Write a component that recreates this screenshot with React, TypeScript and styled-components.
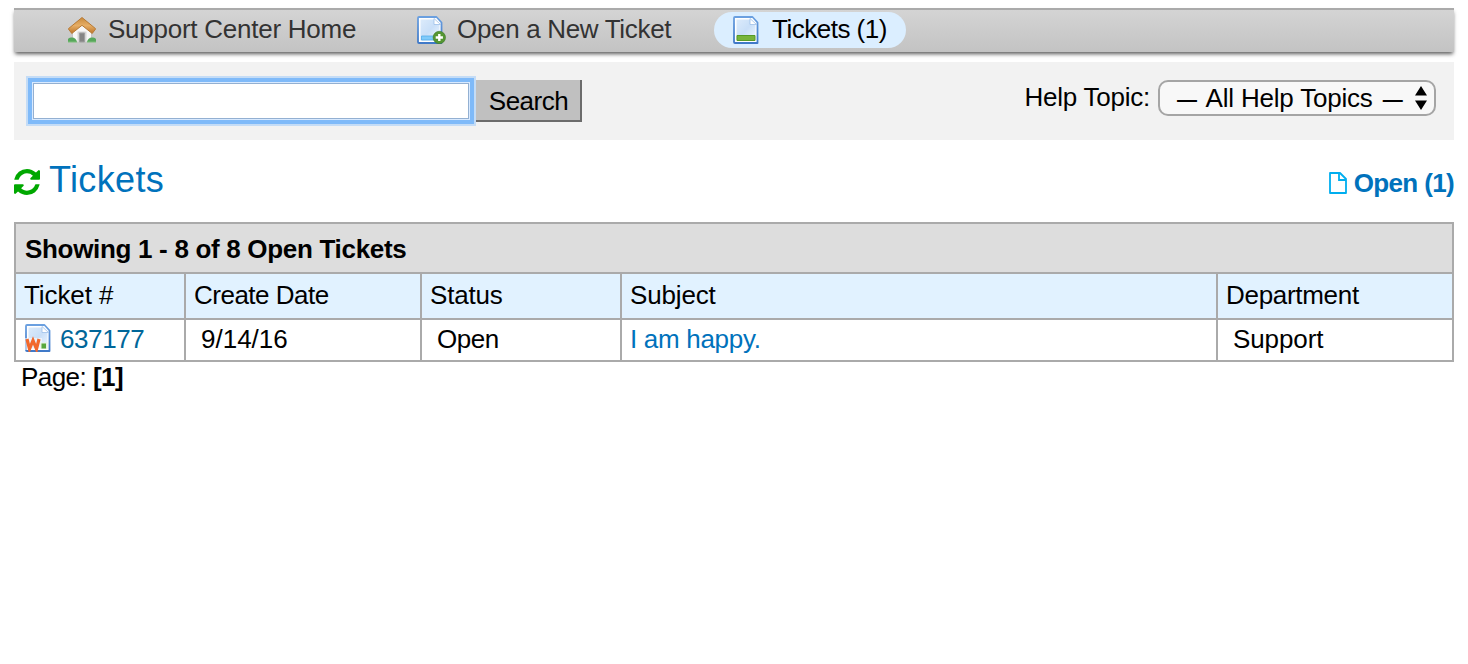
import React from "react";
import styled, { createGlobalStyle } from "styled-components";

const GlobalStyle = createGlobalStyle`
  * { box-sizing: border-box; }
  body {
    margin: 0;
    background: #fff;
    color: #000;
    font-family: "Liberation Sans", Arial, sans-serif;
    font-size: 26px;
    line-height: 30px;
  }
`;

const Page = styled.div`
  padding: 8px 14px 0;
`;

const Label = styled.span<{ $track?: number }>`
  white-space: nowrap;
  letter-spacing: ${(p) => p.$track ?? 0}px;
`;

const Nav = styled.nav`
  display: flex;
  align-items: flex-start;
  height: 44px;
  padding: 2px 0 0 35px;
  border-top: 2px solid #aaa;
  background: linear-gradient(#d4d4d4, #c3c3c3);
  box-shadow: 0 3px 4px -1px rgba(0, 0, 0, 0.65);
`;

const NavItem = styled.a<{ $active?: boolean; $width: number; $gap: number }>`
  display: flex;
  align-items: center;
  gap: ${(p) => p.$gap}px;
  width: ${(p) => p.$width}px;
  height: 36px;
  padding-left: 19px;
  border-radius: 18px;
  background: ${(p) => (p.$active ? "#dbeeff" : "transparent")};
  color: ${(p) => (p.$active ? "#000" : "#333")};
  margin-right: 30px;

  svg { flex: none; }
  ${Label} { padding-bottom: 2px; }
`;

const SearchBar = styled.section`
  display: flex;
  justify-content: space-between;
  align-items: flex-start;
  height: 78px;
  margin-top: 10px;
  padding: 18px 18px 0 19px;
  background: #f2f2f2;
`;

const SearchForm = styled.form`
  display: flex;
`;

const SearchInput = styled.input`
  width: 436px;
  height: 36px;
  margin: 3px 7px 0 0;
  padding: 0 6px;
  border: 1px solid #93b0d2;
  border-radius: 0;
  outline: none;
  background: #fff;
  font: inherit;
  box-shadow: 0 0 0 1px #d9eaff, 0 0 0 5px #7fbaf9, 0 0 0 7px #c4dcf6;
`;

const SearchButton = styled.button`
  width: 106px;
  height: 42px;
  padding: 1px 0 0 1px;
  border: 0 solid #6c6c6c;
  border-right-width: 2px;
  border-bottom-width: 2px;
  background: #c0c0c0;
  color: #000;
  font: inherit;
`;

const TopicField = styled.div`
  display: flex;
  align-items: flex-start;
  gap: 8px;
  line-height: 34px;
`;

const TopicSelect = styled.div`
  display: flex;
  align-items: center;
  justify-content: space-between;
  width: 278px;
  height: 36px;
  padding: 0 7px 0 17px;
  border: 2px solid #a5a5a5;
  border-radius: 10px;
  background: #f8f8f8;
`;

const Dash = styled.span`
  font-size: 20px;
  font-weight: 700;
  line-height: 1;
  letter-spacing: 0;
  vertical-align: 1px;
  margin: 0 3px 0 0;

  &:last-child { margin: 0 0 0 3px; }
`;

const HeadingRow = styled.header`
  display: flex;
  justify-content: space-between;
  height: 82px;
  padding-top: 18px;
`;

const Title = styled.h1`
  display: flex;
  gap: 9px;
  margin: 0;
  color: #0072bc;
  font-size: 36px;
  font-weight: 400;
  line-height: 44px;

  svg { margin-top: 11px; }
`;

const OpenLink = styled.a`
  display: flex;
  gap: 7px;
  height: 30px;
  margin-top: 10px;
  color: #0072bc;
  font-weight: 700;

  svg { margin-top: 4px; }
`;

const Table = styled.div`
  display: grid;
  grid-template-columns: 168px 234px 198px 594px 234px;
  grid-template-rows: 48px 44px 40px;
  gap: 2px;
  padding: 2px;
  background: #aaa;
`;

const Cell = styled.div<{ $pad?: number; $color?: string }>`
  display: flex;
  align-items: center;
  padding-left: ${(p) => p.$pad ?? 8}px;
  padding-bottom: 2px;
  background: #fff;
  color: ${(p) => p.$color ?? "#000"};
`;

const Caption = styled(Cell)`
  grid-column: 1 / -1;
  padding-top: 2px;
  padding-bottom: 0;
  background: #ddd;
  font-weight: 700;
`;

const HeadCell = styled(Cell)`
  background: #e1f2ff;
`;

const TicketIcon = styled.span`
  display: flex;
  margin: 0 9px 2px 0;
`;

const Pager = styled.footer`
  padding: 0 0 0 7px;
`;

const HomeIcon = () => (
  <svg width="28" height="26" viewBox="0 0 28 26">
    <defs>
      <linearGradient id="roof" x2="0" y2="1">
        <stop stopColor="#c98a3c" />
        <stop offset=".5" stopColor="#e6ae66" />
        <stop offset="1" stopColor="#bd7428" />
      </linearGradient>
    </defs>
    <path d="M4.500 13 14 5l9.500 8v12h-19z" fill="#f7f7f7" stroke="#c4c4c4" />
    <path d="M9.500 14.500h9V25h-9z" fill="#d4d4d4" />
    <path d="M11.500 16h5v9h-5z" fill="#858585" stroke="#a0a0a0" />
    <path d="M0 25v-3q1-2 4-1.500 4 0 5 4.500zM28 25v-3q-1-2-4-1.500-4 0-5 4.500z" fill="#57a75b" />
    <path d="M0 24.5h9v1H0zM19 24.5h9v1h-9z" fill="#7ec07a" />
    <path d="M14 .5 27.700 11.800 24.200 16.500 14 8.300 3.800 16.500 .3 11.800z" fill="url(#roof)" stroke="#b77a35" strokeWidth="1" strokeLinejoin="round" />
  </svg>
);

type PageIconProps = { kind: "new" | "list" | "web" };

const PageIcon = ({ kind }: PageIconProps) => (
  <svg width={kind === "new" ? 29 : 26} height="28" viewBox={kind === "new" ? "0 0 29 28" : "0 0 26 28"}>
    <defs>
      <linearGradient id={`sheet-${kind}`} x2="1" y2="1">
        <stop stopColor="#dcebfb" />
        <stop offset=".5" stopColor="#c9dff8" />
        <stop offset="1" stopColor="#f0f7ff" />
      </linearGradient>
      <linearGradient id={`edge-${kind}`} x2="0" y2="1">
        <stop stopColor="#6ba0e0" />
        <stop offset="1" stopColor="#3f79c8" />
      </linearGradient>
    </defs>
    <path d="M2 1h17.500l5 5.500V27H2q-1 0-1-1V2q0-1 1-1z" fill="#fff" stroke={`url(#edge-${kind})`} strokeWidth="1.8" strokeLinejoin="round" />
    <path d="M3.5 3.5H17l5.5 6v15h-19z" fill={`url(#sheet-${kind})`} />
    <path d="M17 2.500v6h6.500z" fill="#fff" stroke="#9dbfe8" strokeWidth=".8" />
    {kind === "new" && (
      <>
        <path d="M4.5 20h14v4h-14z" fill="#7fcafa" stroke="#53ace9" strokeWidth=".8" />
        <circle cx="22.3" cy="21.500" r="6.200" fill="#559632" stroke="#3d7826" strokeWidth=".6" />
        <path d="M18.7 21.500h7.2M22.3 17.900v7.2" stroke="#fff" strokeWidth="2.4" />
      </>
    )}
    {kind === "list" && <path d="M4 19.5h18v5H4z" fill="#78b43a" stroke="#569a27" />}
    {kind === "web" && (
      <>
        <path d="M0 14h17v12H0z" fill="#fff" opacity=".55" />
        <path d="m2 15 2.500 10L8 16.500 11.500 25 14 15" fill="none" stroke="#f2682c" strokeWidth="3.200" />
        <path d="M15.500 18.500h7v6.500h-7z" fill="#e6f2df" />
        <path d="M16.500 19.500H21v5h-4.500z" fill="#58a83c" />
      </>
    )}
  </svg>
);

const RefreshIcon = () => (
  <svg width="26" height="26" viewBox="0 0 1536 1536">
    <path
      fill="#00a800"
      d="M1511 928q0 5-1 7-64 268-268 434.500T764 1536q-146 0-282.500-55T238 1324l-129 129q-19 19-45 19t-45-19-19-45V960q0-26 19-45t45-19h448q26 0 45 19t19 45-19 45l-137 137q71 66 161 102t187 36q134 0 250-65t186-179q11-17 53-117 8-23 30-23h192q13 0 22.500 9.500t9.500 22.500zm25-800v448q0 26-19 45t-45 19h-448q-26 0-45-19t-19-45 19-45l138-138Q969 256 768 256q-134 0-250 65T332 500q-11 17-53 117-8 23-30 23H50q-13 0-22.500-9.500T18 608v-7q65-268 270-434.500T768 0q146 0 284 55.500T1297 212l130-129q19-19 45-19t45 19 19 45z"
    />
  </svg>
);

const FileIcon = () => (
  <svg width="18" height="22" viewBox="0 0 18 22" fill="none" stroke="#00aeef" strokeWidth="1.800">
    <path d="M1 1h10l6 6v14H1z" strokeLinejoin="round" />
    <path d="M10 1v7h7" />
  </svg>
);

const SelectArrows = () => (
  <svg width="12" height="24" viewBox="0 0 12 24">
    <path d="M6 0l6 9.500H0zM6 24l6-9.500H0z" />
  </svg>
);

export default function App() {
  return (
    <Page>
      <GlobalStyle />
      <Nav>
        <NavItem $width={319} $gap={12}>
          <HomeIcon />
          <Label $track={-0.25}>Support Center Home</Label>
        </NavItem>
        <NavItem $width={286} $gap={11}>
          <PageIcon kind="new" />
          <Label $track={-0.32}>Open a New Ticket</Label>
        </NavItem>
        <NavItem $active $width={192} $gap={13}>
          <PageIcon kind="list" />
          <Label $track={-0.5}>Tickets (1)</Label>
        </NavItem>
      </Nav>

      <SearchBar>
        <SearchForm>
          <SearchInput aria-label="Search tickets" />
          <SearchButton type="button">
            <Label $track={-0.5}>Search</Label>
          </SearchButton>
        </SearchForm>
        <TopicField>
          <Label $track={-0.25}>Help Topic:</Label>
          <TopicSelect>
            <Label $track={-0.2}>
              <Dash>—</Dash> All Help Topics <Dash>—</Dash>
            </Label>
            <SelectArrows />
          </TopicSelect>
        </TopicField>
      </SearchBar>

      <HeadingRow>
        <Title>
          <RefreshIcon />
          <Label $track={0.35}>Tickets</Label>
        </Title>
        <OpenLink>
          <FileIcon />
          <Label $track={-0.65}>Open (1)</Label>
        </OpenLink>
      </HeadingRow>

      <Table>
        <Caption $pad={9}>
          <Label $track={-0.31}>Showing 1 - 8 of 8 Open Tickets</Label>
        </Caption>
        <HeadCell><Label $track={-0.1}>Ticket #</Label></HeadCell>
        <HeadCell><Label $track={-0.5}>Create Date</Label></HeadCell>
        <HeadCell><Label $track={-0.2}>Status</Label></HeadCell>
        <HeadCell><Label $track={-0.15}>Subject</Label></HeadCell>
        <HeadCell><Label $track={-0.3}>Department</Label></HeadCell>
        <Cell $pad={9} $color="#006699">
          <TicketIcon><PageIcon kind="web" /></TicketIcon>
          <Label $track={-0.4}>637177</Label>
        </Cell>
        <Cell $pad={15}><Label>9/14/16</Label></Cell>
        <Cell $pad={15}><Label $track={-0.5}>Open</Label></Cell>
        <Cell $color="#0072bc"><Label $track={-0.3}>I am happy.</Label></Cell>
        <Cell $pad={15}><Label $track={-0.1}>Support</Label></Cell>
      </Table>
      <Pager>
        <Label $track={-0.55}>Page: <b>[1]</b></Label>
      </Pager>
    </Page>
  );
}
